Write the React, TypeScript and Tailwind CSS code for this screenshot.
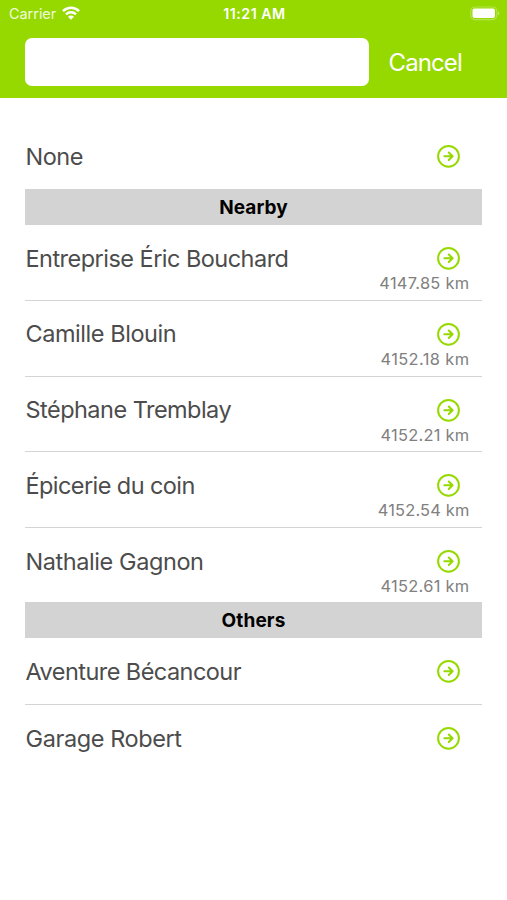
import React from "react";

type Entry = {
  name: string;
  distance?: string;
  tracking: string;
  distanceTracking?: string;
  height: string;
  line?: boolean;
};

const nearby: Entry[] = [
  { name: "Entreprise Éric Bouchard", distance: "4147.85 km", tracking: "tracking-[-0.53px]", distanceTracking: "tracking-[0.3px]", height: "h-[75.5px]", line: true },
  { name: "Camille Blouin", distance: "4152.18 km", tracking: "tracking-[-0.45px]", distanceTracking: "tracking-[0.4px]", height: "h-[76px]", line: true },
  { name: "Stéphane Tremblay", distance: "4152.21 km", tracking: "tracking-[-0.53px]", distanceTracking: "tracking-[0.28px]", height: "h-[75.5px]", line: true },
  { name: "Épicerie du coin", distance: "4152.54 km", tracking: "tracking-[-0.58px]", distanceTracking: "tracking-[0.18px]", height: "h-[76px]", line: true },
  { name: "Nathalie Gagnon", distance: "4152.61 km", tracking: "tracking-[-0.42px]", distanceTracking: "tracking-[0.3px]", height: "h-[74px]" },
];

const others: Entry[] = [
  { name: "Aventure Bécancour", tracking: "tracking-[-0.55px]", height: "h-[67px]", line: true },
  { name: "Garage Robert", tracking: "tracking-[-0.4px]", height: "h-[67px]" },
];

function ArrowCircle() {
  return (
    <svg className="mb-px h-6 w-6 shrink-0" viewBox="0 0 24 24" fill="none" stroke="#96d900" strokeWidth="2" strokeLinecap="round" strokeLinejoin="round">
      <circle cx="12.5" cy="12.3" r="10.4" />
      <path d="M8.4 12.3H16.2M12.8 8.5L16.6 12.3L12.8 16.1" strokeWidth="2.1" />
    </svg>
  );
}

function Row({ name, distance, tracking, distanceTracking, height, line }: Entry) {
  return (
    <li className={`${height} ${line ? "border-b border-[#d4d4d4]" : ""}`}>
      <div className="flex h-[67px] items-center justify-between pr-[22px] pl-[0.5px]">
        <span className={`whitespace-nowrap text-[23.5px] leading-7 text-[#4c4c4c] ${tracking}`}>{name}</span>
        <ArrowCircle />
      </div>
      {distance && (
        <p className={`-mt-[19px] pr-[12.5px] text-right text-[16.4px] leading-5 text-[#808080] ${distanceTracking}`}>{distance}</p>
      )}
    </li>
  );
}

function SectionTitle({ children }: { children: string }) {
  return (
    <h2 className="flex h-9 items-center justify-center bg-[#d3d3d3] pt-px text-[19px] leading-6 font-bold tracking-[0.1px] text-black">
      {children}
    </h2>
  );
}

export default function App() {
  return (
    <div className="h-[900px] w-[507px] overflow-hidden bg-white font-['Inter','Liberation_Sans',sans-serif]">
      <header className="h-[98px] bg-[#96d900] text-white">
        <div className="grid h-7 grid-cols-3 items-center pr-[7px] pl-[9px]">
          <div className="flex items-center gap-[6px] text-[14.4px] leading-5 text-white/85">
            Carrier
            <svg className="mb-[2px] h-[14px] w-[18px]" viewBox="0 0 18 14" fill="none" stroke="white" strokeWidth="2.5">
              <path d="M1 5.1C5.5 .7 12.5 .7 17 5.1" />
              <path d="M4 8.3C6.8 5.6 11.2 5.6 14 8.3" />
              <path d="M9 13.7L6 10.7C7.7 9.2 10.3 9.2 12 10.7Z" fill="white" stroke="none" />
            </svg>
          </div>
          <span className="text-center text-[14.2px] leading-5 font-semibold tracking-[0.5px] whitespace-nowrap">11:21 AM</span>
          <svg className="h-4 w-[30px] justify-self-end" viewBox="0 0 30 16" fill="none">
            <rect x=".8" y="1" width="26" height="12.6" rx="4" stroke="white" strokeOpacity=".3" strokeWidth="1.2" />
            <rect x="2.5" y="2.6" width="22.5" height="9.4" rx="2" fill="white" />
            <path d="M28 5.2C29.8 6.2 29.8 8.4 28 9.4Z" fill="white" fillOpacity=".4" />
          </svg>
        </div>
        <div className="flex items-center pt-[10px] pl-[25px]">
          <input aria-label="Search" className="h-12 w-[343.5px] rounded-[7px] bg-white px-3 text-[23px] text-[#4c4c4c] outline-none" />
          <button className="mt-[2px] ml-5 text-[24px] leading-7 tracking-[-0.9px]">Cancel</button>
        </div>
      </header>
      <main className="px-[25px] pt-[25px]">
        <ul>
          <Row name="None" tracking="tracking-[-0.5px]" height="h-[66px]" />
        </ul>
        <SectionTitle>Nearby</SectionTitle>
        <ul>
          {nearby.map((entry) => (
            <Row key={entry.name} {...entry} />
          ))}
        </ul>
        <SectionTitle>Others</SectionTitle>
        <ul>
          {others.map((entry) => (
            <Row key={entry.name} {...entry} />
          ))}
        </ul>
      </main>
    </div>
  );
}
